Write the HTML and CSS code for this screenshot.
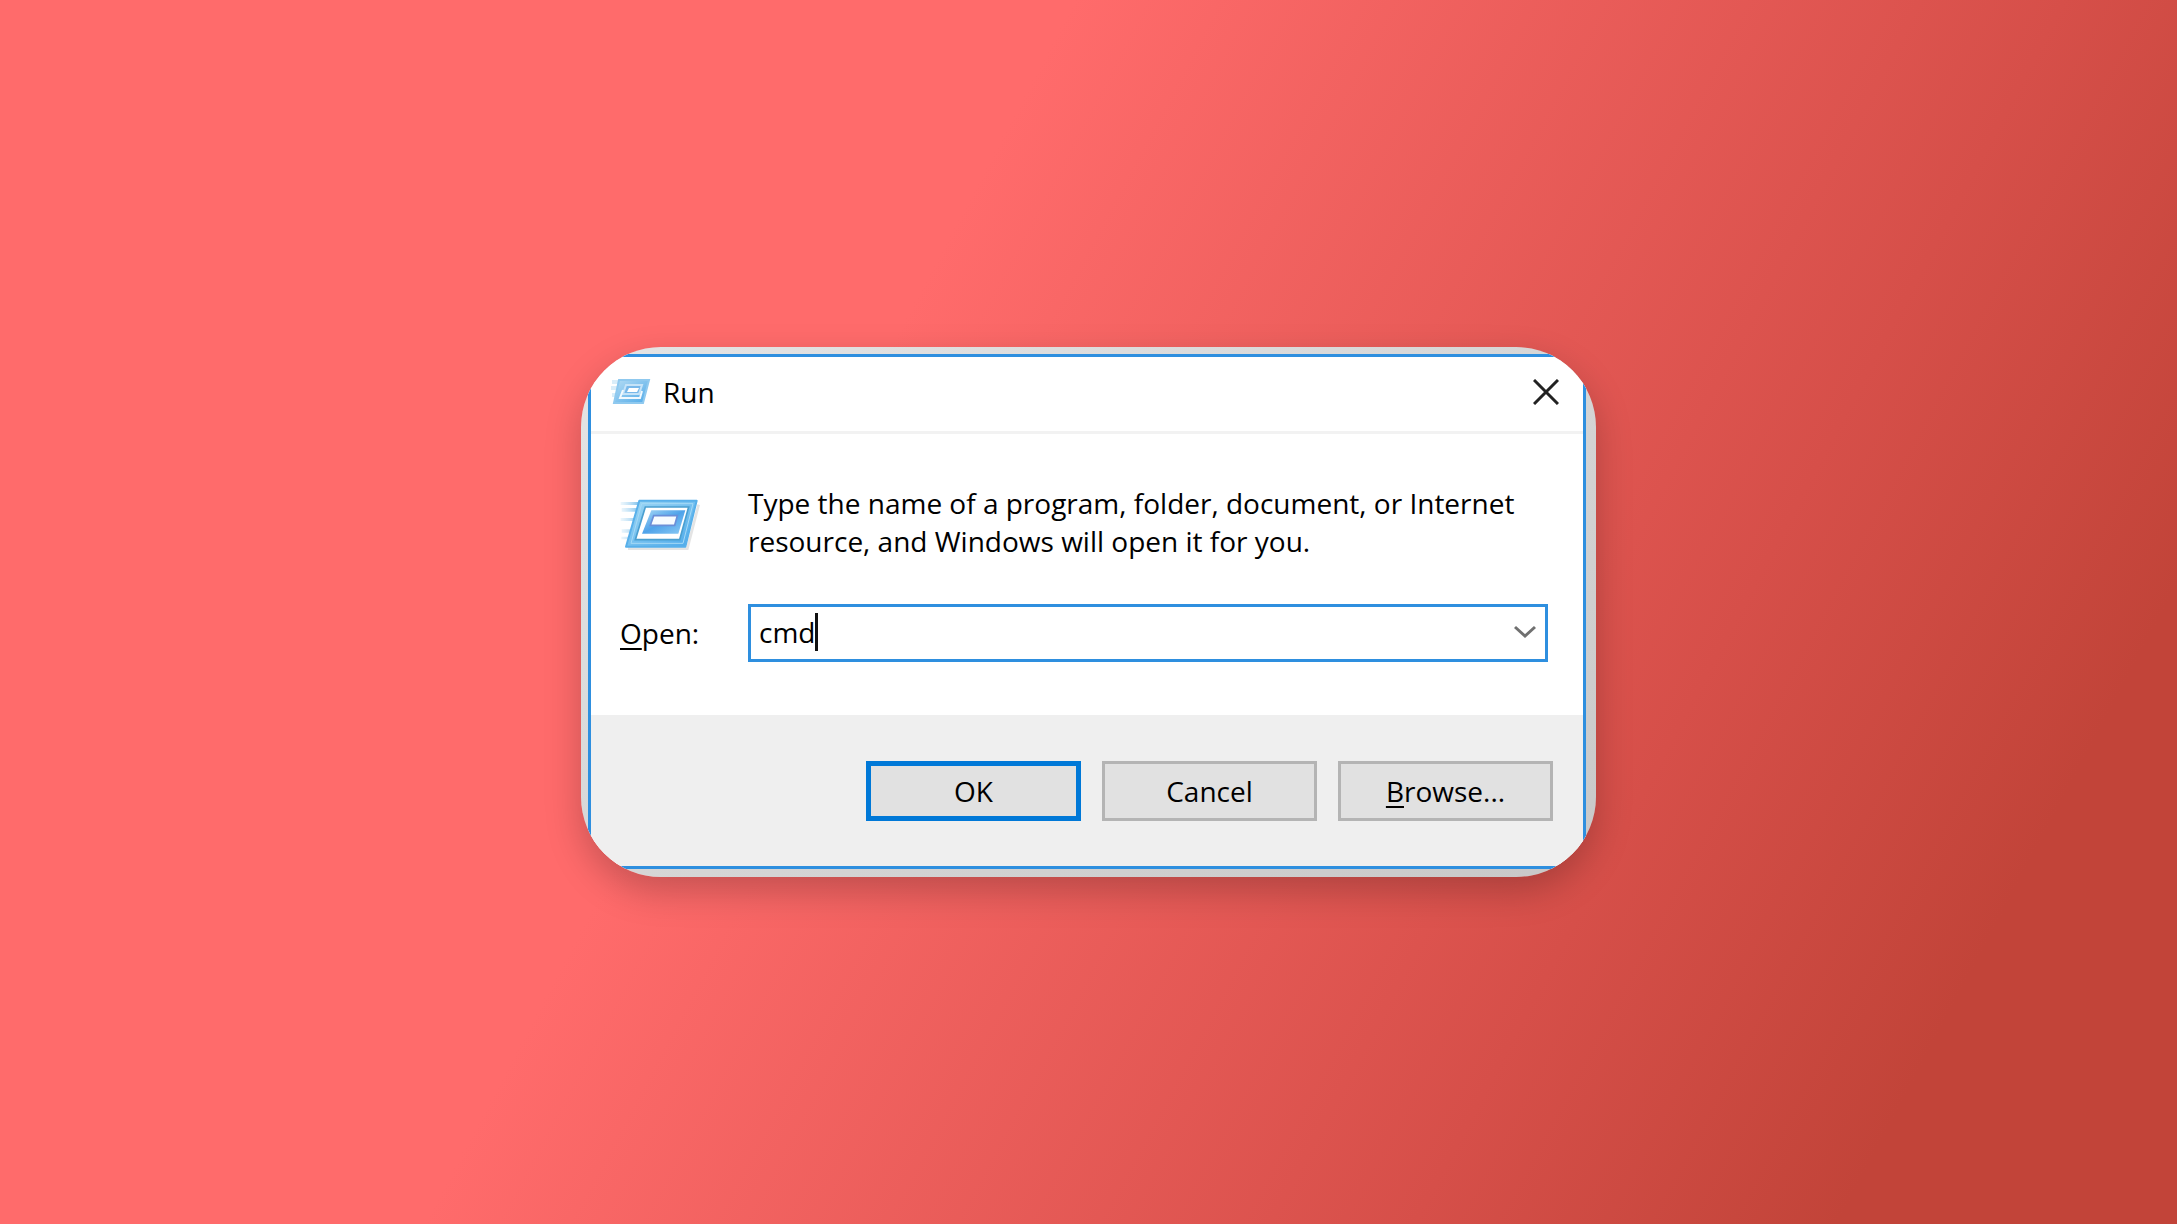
FILE: index.html
```html
<!DOCTYPE html>
<html lang="en">

<head>
    <meta charset="UTF-8">
    <meta name="viewport" content="width=device-width, initial-scale=1.0">
    <title>Run</title>
    <link rel="stylesheet" href="styles.css">
</head>

<body>
    <main class="frame">
        <form class="window">
            <header class="titlebar">
                <svg class="title-icon" viewBox="0 0 40 28" aria-hidden="true">
                    <defs>
                        <linearGradient id="small-blue" x1="0" y1="0" x2="1" y2="1">
                            <stop offset="0" stop-color="#b4dcf4" />
                            <stop offset="1" stop-color="#4fa9e8" />
                        </linearGradient>
                    </defs>
                    <path d="M1 4h8M0 10h7M1 17h5" stroke="#d9edf9" stroke-width="4" />
                    <path d="M8 2H38L32 25H3Z" fill="url(#small-blue)" stroke="#8fc9ef" stroke-width="2" />
                    <path d="M15 7H31L28 16H12Z" fill="#78b8ea" stroke="#c5e3f8" stroke-width="2" />
                    <path d="M12 12L9 20H29L31 13" fill="none" stroke="#f2f9fe" stroke-width="2" />
                    <path d="M18 10H28L26 14H16Z" fill="#fff" />
                </svg>
                <h1 class="title">Run</h1>
                <button type="button" class="close" aria-label="Close">
                    <svg viewBox="0 0 26 26" aria-hidden="true">
                        <path d="M1 1L25 25M25 1L1 25" stroke="#222" stroke-width="3" />
                    </svg>
                </button>
            </header>

            <div class="content">
                <svg class="run-icon" viewBox="0 -20 240 180" aria-hidden="true">
                    <defs>
                        <linearGradient id="rim" x1="0" y1="0" x2="1" y2="1">
                            <stop offset="0" stop-color="#9fd8f4" />
                            <stop offset="1" stop-color="#4aa8ea" />
                        </linearGradient>
                        <linearGradient id="screen" x1="0" y1="0" x2="1" y2="1">
                            <stop offset="0" stop-color="#a9d9f6" />
                            <stop offset="0.5" stop-color="#4fa3ea" />
                            <stop offset="1" stop-color="#8ccbf4" />
                        </linearGradient>
                        <linearGradient id="speed" x1="0" x2="1">
                            <stop offset="0" stop-color="#cfe9f8" stop-opacity="0.4" />
                            <stop offset="1" stop-color="#7cc0ec" />
                        </linearGradient>
                    </defs>
                    <path d="M24 150H202L236 18" fill="none" stroke="#e4e4e4" stroke-width="8" />
                    <path d="M2 10h56v9H2zM5 28h46v11H5zM2 58h40v9H2zM5 92h30v10H5zM4 114h22v8H4z" fill="url(#speed)" />
                    <path d="M58 6H230L196 144H18Z" fill="url(#rim)" stroke="#58b0ea" stroke-width="6" stroke-linejoin="round" />
                    <path d="M65 15H219L189 134H33Z" fill="none" stroke="#a5d9f6" stroke-width="3" />
                    <path d="M76 25H206L179 123H46Z" fill="#fff" stroke="#4a9fd0" stroke-width="5" />
                    <path d="M94 35H196L175 105H66Z" fill="url(#screen)" />
                    <path d="M101 51H172L164 80H91Z" fill="#f7fbff" stroke="#6b8fd8" stroke-width="5" />
                </svg>
                <p class="message">Type the name of a program, folder, document, or Internet resource, and Windows will open it for you.</p>
                <label class="label" for="command"><u>O</u>pen:</label>
                <div class="combo">
                    <input class="command" id="command" type="text" value="cmd" autocomplete="off" spellcheck="false">
                    <span class="caret"></span>
                    <button type="button" class="dropdown" aria-label="Show recent commands">
                        <svg viewBox="0 0 22 14" aria-hidden="true">
                            <path d="M1 2L11 11L21 2" fill="none" stroke="#707070" stroke-width="3" />
                        </svg>
                    </button>
                </div>
            </div>

            <footer class="actions">
                <button type="submit" class="button primary">OK</button>
                <button type="button" class="button">Cancel</button>
                <button type="button" class="button"><span><u>B</u>rowse...</span></button>
            </footer>
        </form>
    </main>
</body>

</html>
```

FILE: styles.css
```css
* {
    box-sizing: border-box;
}

body {
    margin: 0;
    min-height: 100vh;
    display: flex;
    align-items: center;
    justify-content: center;
    background: linear-gradient(118deg, #ff6b6b 38%, #d64f49 73%, #c24439 88%);
    font-family: "Open Sans", "Noto Sans", sans-serif;
    font-size: 28px;
    line-height: 38px;
    color: #000;
}

.frame {
    width: 94%;
    max-width: 1015px;
    padding: 7px 10px 8px 7px;
    background: linear-gradient(150deg, #e4e4e4, #c8c8c8);
    border-radius: 80px;
    overflow: hidden;
    box-shadow: 0 14px 36px rgba(0, 0, 0, 0.22);
}

.window {
    border: 3px solid #2e8fdf;
    background: #fff;
}

.titlebar {
    display: flex;
    align-items: center;
    height: 77px;
    padding: 0 24px 4px 20px;
    border-bottom: 3px solid #f2f2f2;
}

.title-icon {
    width: 40px;
    height: 28px;
}

.title {
    margin: 0 auto 0 12px;
    font-size: 28px;
    font-weight: 400;
}

.close,
.dropdown {
    display: flex;
    padding: 0;
    border: 0;
    background: none;
    cursor: pointer;
}

.close svg {
    width: 26px;
    height: 26px;
}

.content {
    display: grid;
    grid-template-columns: 128px 1fr;
    row-gap: 44px;
    align-items: center;
    padding: 50px 35px 53px 29px;
}

.run-icon {
    width: 80px;
    height: 60px;
}

.message {
    margin: 0;
}

u {
    text-decoration-thickness: 2px;
    text-underline-offset: 4px;
}

.combo {
    display: flex;
    align-items: center;
    height: 58px;
    padding: 0 9px 2px 8px;
    border: 3px solid #2e8fdf;
}

.command {
    field-sizing: content;
    padding: 0;
    border: 0;
    outline: 0;
    background: none;
    font: inherit;
    color: inherit;
}

.caret {
    width: 3px;
    height: 38px;
    background: #111;
}

.dropdown {
    margin-left: auto;
}

.dropdown svg {
    width: 22px;
    height: 14px;
}

.actions {
    display: flex;
    justify-content: flex-end;
    gap: 21px;
    padding: 46px 30px 45px;
    background: #efefef;
}

.button {
    width: 215px;
    height: 60px;
    padding: 0;
    border: 3px solid #b4b4b4;
    background: #e1e1e1;
    font: inherit;
    color: inherit;
    cursor: pointer;
}

.primary {
    border: 5px solid #0078d7;
}
```
